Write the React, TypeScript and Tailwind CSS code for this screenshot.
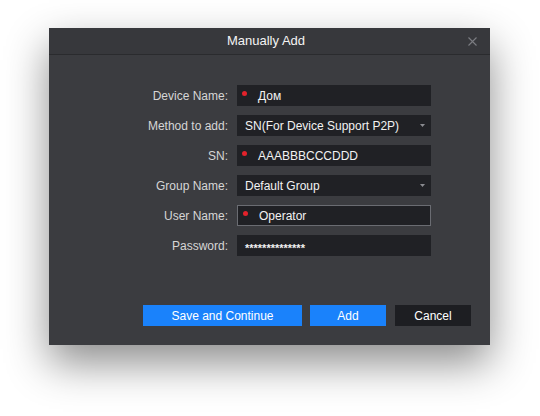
import React from "react";

const FONT = { fontFamily: '"Liberation Sans", Arial, sans-serif' };

type Row = { label: string; value: string; required?: boolean; select?: boolean; focused?: boolean; password?: boolean };

const ROWS: Row[] = [
  { label: "Device Name:", value: "Дом", required: true },
  { label: "Method to add:", value: "SN(For Device Support P2P)", select: true },
  { label: "SN:", value: "AAABBBCCCDDD", required: true },
  { label: "Group Name:", value: "Default Group", select: true },
  { label: "User Name:", value: "Operator", required: true, focused: true },
  { label: "Password:", value: "**************", password: true },
];

function Field({ row }: { row: Row }) {
  return (
    <div
      className={
        "flex h-[21px] w-[194px] items-center bg-[#202125] text-[12px] text-[#f2f2f2] " +
        (row.focused ? "border border-[#6a6c72]" : "")
      }
    >
      {row.required && <span className="ml-[5px] -mt-[5px] h-[5px] w-[5px] rounded-full bg-[#e3222b]" />}
      <span className={row.required ? "ml-[11px]" : "ml-[8px]"}>
        {row.password ? <span className="relative top-[2px] text-[11px] font-bold">{row.value}</span> : row.value}
      </span>
      {row.select && (
        <svg className="ml-auto mr-[6px]" width="5" height="3" viewBox="0 0 5 3">
          <path d="M0 0h5L2.5 3z" fill="#8a8b90" />
        </svg>
      )}
    </div>
  );
}

export default function App() {
  return (
    <div className="h-[416px] w-[540px] bg-white pl-[49px] pt-[28px]" style={FONT}>
      <div className="flex h-[317px] w-[441px] flex-col bg-[#3b3c40] shadow-[0_18px_40px_rgba(0,0,0,0.45)]">
        {/* Title */}
        <div className="flex h-[27px] items-center border-b border-[#2a2b2e] bg-[#37383c]">
          <div className="w-[15px]" />
          <div className="flex-1 text-center text-[13px] text-[#f4f4f4]">Manually Add</div>
          <svg className="mr-[13px]" width="9" height="9" viewBox="0 0 9 9">
            <path d="M0.5 0.5l8 8M8.5 0.5l-8 8" stroke="#7c7d82" strokeWidth="1.1" />
          </svg>
        </div>

        {/* Form */}
        <div className="flex flex-col gap-[9px] pt-[30px]">
          {ROWS.map((row) => (
            <div key={row.label} className="flex items-center">
              <div className="w-[180px] pr-[1px] text-right text-[12px] text-[#d6d6d6]">{row.label}</div>
              <div className="ml-[8px]">
                <Field row={row} />
              </div>
            </div>
          ))}
        </div>

        {/* Buttons */}
        <div className="mt-[49px] flex justify-end gap-[8px] pr-[19px] text-[12px] text-white">
          <button className="h-[21px] w-[159px] bg-[#1a82fb]">Save and Continue</button>
          <button className="h-[21px] w-[76px] bg-[#1a82fb]">Add</button>
          <button className="ml-[1px] h-[21px] w-[76px] bg-[#1d1e22]">Cancel</button>
        </div>
      </div>
    </div>
  );
}
